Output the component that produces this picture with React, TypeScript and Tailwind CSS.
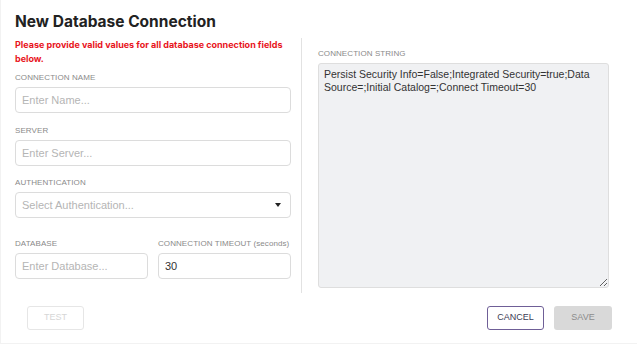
import React from 'react';

const label = 'block text-[8px] leading-[10px] tracking-[0.01em] text-[#8a8a8a] uppercase';
const input =
  'w-full h-[26px] rounded-[4px] border border-[#dcdcdc] bg-white px-[6px] text-[11px] text-[#333] placeholder:text-[#b5b5b5] outline-none';

export default function App() {
  return (
    <div className="w-[637px] h-[348px] bg-white font-['Liberation_Sans',Arial,sans-serif]">
      <div className="h-[344px] border-b border-l border-[#f2f2f2]">
        <div className="px-[14px] pt-[12px]">
          <h1 className="font-['Inter',sans-serif] font-bold text-[15.5px] leading-[20px] text-[#222]">
            New Database Connection
          </h1>
          <div className="flex mt-[6px]">
            {/* left form */}
            <div className="w-[276px] flex flex-col">
              <p className="font-['Inter',sans-serif] font-bold text-[9px] leading-[14px] text-[#e8141c]">
                Please provide valid values for all database connection fields below.
              </p>
              <label className={`${label} mt-[7px]`}>Connection Name</label>
              <input className={`${input} mt-[4px]`} placeholder="Enter Name..." />
              <label className={`${label} mt-[13px]`}>Server</label>
              <input className={`${input} mt-[4px]`} placeholder="Enter Server..." />
              <label className={`${label} mt-[12px]`}>Authentication</label>
              <div className="relative mt-[4px]">
                <div className={`${input} flex items-center text-[#b5b5b5]`}>Select Authentication...</div>
                <span className="absolute right-[10px] top-[11px] w-0 h-0 border-l-[3px] border-r-[3px] border-t-[4px] border-l-transparent border-r-transparent border-t-[#222]" />
              </div>
              <div className="grid grid-cols-2 gap-[10px] mt-[21px]">
                <div>
                  <label className={label}>Database</label>
                  <input className={`${input} mt-[4px]`} placeholder="Enter Database..." />
                </div>
                <div>
                  <label className={label}>
                    Connection Timeout <span className="normal-case">(seconds)</span>
                  </label>
                  <input className={`${input} mt-[4px]`} defaultValue="30" />
                </div>
              </div>
            </div>
            {/* divider */}
            <div className="w-px bg-[#e2e2e2] ml-[10px] h-[255px]" />
            {/* right */}
            <div className="ml-[16px] w-[291px] pt-[11px] flex flex-col">
              <label className={label}>Connection String</label>
              <textarea
                className="mt-[4px] w-full h-[225px] rounded-[3px] border border-[#dedede] bg-[#f0f1f3] px-[5px] py-[4px] text-[10.5px] leading-[13px] text-[#333] outline-none resize"
                defaultValue="Persist Security Info=False;Integrated Security=true;Data Source=;Initial Catalog=;Connect Timeout=30"
                readOnly
              />
            </div>
          </div>
        </div>
        <div className="flex items-center px-[25px] mt-[13px]">
          <button
            disabled
            className="w-[57px] h-[24px] ml-px rounded-[3px] border border-[#e6e6e6] text-[9px] text-[#d6d6d6] uppercase"
          >
            Test
          </button>
          <div className="ml-auto flex gap-[10px]">
            <button className="w-[57px] h-[24px] rounded-[3px] border border-[#6f5f97] text-[9px] text-[#3d3d55] uppercase">
              Cancel
            </button>
            <button
              disabled
              className="w-[58px] h-[24px] rounded-[3px] bg-[#d9d9d9] text-[9px] text-[#8c8c8c] uppercase"
            >
              Save
            </button>
          </div>
        </div>
      </div>
    </div>
  );
}
